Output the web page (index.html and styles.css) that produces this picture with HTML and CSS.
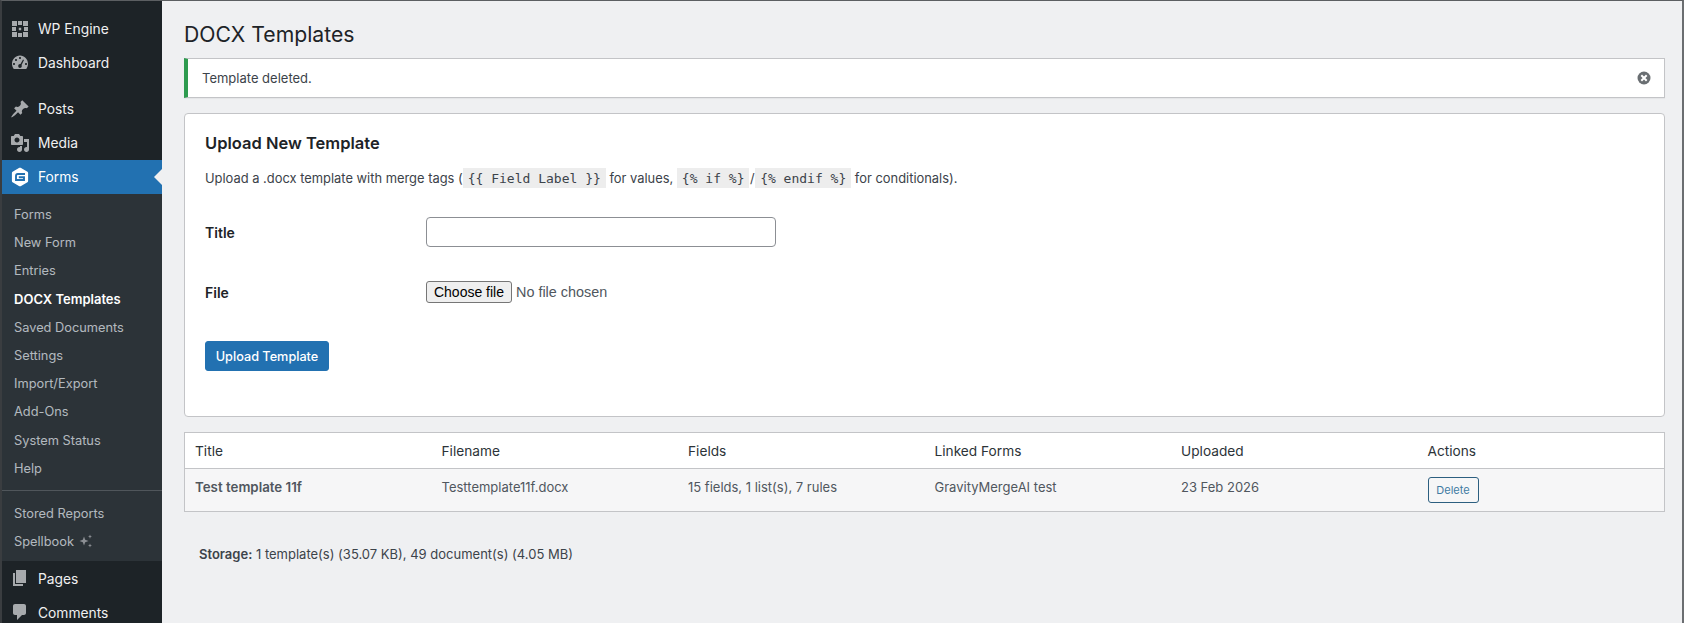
FILE: index.html
```html
<!DOCTYPE html>
<html lang="en">
<head>
<meta charset="utf-8">
<title>DOCX Templates</title>
<link rel="stylesheet" href="styles.css">
</head>
<body>
<div class="app">
  <nav class="sidebar">
    <ul class="menu menu-first">
      <li class="item"><svg class="icon" viewBox="0 0 20 20"><path fill="#a7aaad" d="M2 2h5v5H2zM8 2h4v4H8zM13 2h5v5h-5zM2 8h4v4H2zM14 8h4v4h-4zM2 13h5v5H2zM8 14h4v4H8zM13 13h5v5h-5zM8.800 8.800h2.400v2.400H8.800z"/></svg><span>WP Engine</span></li>
      <li class="item"><svg class="icon" viewBox="0 0 20 20"><path fill="#a7aaad" fill-rule="evenodd" d="M3.760 16h12.480c1.100-1.430 1.760-3.210 1.760-5.140 0-4.620-3.570-8.360-8-8.360s-8 3.740-8 8.360c0 1.930.66 3.710 1.760 5.140zM10 4c.55 0 1 .45 1 1s-.45 1-1 1-1-.45-1-1 .45-1 1-1zM6 6c.55 0 1 .45 1 1s-.45 1-1 1-1-.45-1-1 .45-1 1-1zm8.010 1l-2.440 5.060c.14.28.23.6.23.94 0 1.100-.81 2-1.800 2s-1.800-.9-1.800-2 .81-2 1.800-2c.18 0 .35.03.51.08L13 6.600zM4 10c.55 0 1 .45 1 1s-.45 1-1 1-1-.45-1-1 .45-1 1-1zm12 0c.55 0 1 .45 1 1s-.45 1-1 1-1-.45-1-1 .45-1 1-1z"/></svg><span>Dashboard</span></li>
    </ul>
    <ul class="menu menu-second">
      <li class="item"><svg class="icon" viewBox="0 0 20 20"><path fill="#a7aaad" d="M10.440 3.020l1.820-1.820 6.360 6.350-1.830 1.820c-1.050-.68-2.480-.57-3.410.36l-.75.75c-.92.93-1.040 2.350-.35 3.400l-1.830 1.820-2.410-2.410-2.800 2.790c-.42.42-3.380 2.710-3.800 2.290s1.860-3.390 2.280-3.810l2.790-2.790L4.100 9.360l1.830-1.820c1.050.69 2.480.57 3.400-.36l.75-.75c.93-.92 1.050-2.350.36-3.410z"/></svg><span>Posts</span></li>
      <li class="item"><svg class="icon" viewBox="0 0 20 20"><path fill="#a7aaad" fill-rule="evenodd" d="M13 11V4c0-.55-.45-1-1-1h-1.670L9 1H5L3.670 3H2c-.55 0-1 .45-1 1v7c0 .55.45 1 1 1h10c.55 0 1-.45 1-1zM7 4.500c1.380 0 2.500 1.120 2.500 2.500S8.380 9.500 7 9.500 4.500 8.380 4.500 7 5.620 4.500 7 4.500zM14 6h5v10.500c0 1.380-1.120 2.500-2.500 2.500S14 17.880 14 16.500s1.120-2.500 2.500-2.500c.17 0 .34.02.5.05V9h-3V6zm-4 8.050V13h2v3.500c0 1.380-1.120 2.500-2.500 2.500S7 17.880 7 16.500 8.120 14 9.500 14c.17 0 .34.02.5.05z"/></svg><span>Media</span></li>
      <li class="item item-active"><svg class="icon" viewBox="0 0 20 20"><path fill="#fff" d="M10 2l6.800 3.900v8.200L10 18l-6.800-3.900V5.900z" stroke="#fff" stroke-width="2.600" stroke-linejoin="round"/><path fill="none" stroke="#2271b1" stroke-width="1.900" d="M15 7H7.800C6.600 7 6 7.800 6 9v4h8v-2.700H8.800"/></svg><span>Forms</span><i class="caret"></i></li>
    </ul>
    <ul class="submenu">
      <li>Forms</li>
      <li>New Form</li>
      <li>Entries</li>
      <li class="current">DOCX Templates</li>
      <li>Saved Documents</li>
      <li>Settings</li>
      <li>Import/Export</li>
      <li>Add-Ons</li>
      <li>System Status</li>
      <li>Help</li>
      <li class="divider"></li>
      <li>Stored Reports</li>
      <li>Spellbook <svg class="sparkle" viewBox="0 0 14 14"><path fill="#8c8f94" d="M5 2.500l1.200 3.300L9.500 7 6.200 8.200 5 11.500 3.800 8.200.5 7l3.300-1.200zM11 .5l.6 1.600 1.400.5-1.400.5-.6 1.600-.6-1.600-1.400-.5 1.400-.5zM11 9.500l.6 1.400 1.400.6-1.400.6-.6 1.400-.6-1.400-1.400-.6 1.400-.6z"/></svg></li>
    </ul>
    <ul class="menu">
      <li class="item"><svg class="icon" viewBox="0 0 20 20"><path fill="#a7aaad" d="M6 15V2h10v13H6zm-1 1h8v2H3V5h2v11z"/></svg><span>Pages</span></li>
      <li class="item"><svg class="icon" viewBox="0 0 20 20"><path fill="#a7aaad" d="M5 2h9c1.100 0 2 .9 2 2v7c0 1.100-.9 2-2 2h-2l-5 5v-5H5c-1.100 0-2-.9-2-2V4c0-1.100.9-2 2-2z"/></svg><span>Comments</span></li>
    </ul>
  </nav>
  <main class="content">
    <h1 class="page-title">DOCX Templates</h1>
    <div class="notice">
      <p>Template deleted.</p>
      <svg class="dismiss" viewBox="0 0 14 14"><circle cx="7" cy="7" r="6.500" fill="#696e72"/><path stroke="#fff" stroke-width="2" d="M4.300 4.300l5.400 5.400M9.700 4.300l-5.400 5.400"/></svg>
    </div>
    <section class="card">
      <h2 class="card-title">Upload New Template</h2>
      <p class="intro">Upload a .docx template with merge tags (<code>{{ Field Label }}</code> for values, <code>{% if %}</code><span class="slash">/</span><code>{% endif %}</code> for conditionals).</p>
      <div class="form-row row-title">
        <label class="form-label" for="tpl-title">Title</label>
        <input class="text-input" id="tpl-title" type="text">
      </div>
      <div class="form-row row-file">
        <span class="form-label">File</span>
        <button class="file-btn" type="button">Choose file</button>
        <span class="file-status">No file chosen</span>
      </div>
      <button class="primary-btn" type="button">Upload Template</button>
    </section>
    <table class="templates">
      <thead>
        <tr><th>Title</th><th>Filename</th><th>Fields</th><th>Linked Forms</th><th>Uploaded</th><th>Actions</th></tr>
      </thead>
      <tbody>
        <tr>
          <td><strong>Test template 11f</strong></td>
          <td>Testtemplate11f.docx</td>
          <td>15 fields, 1 list(s), 7 rules</td>
          <td>GravityMergeAI test</td>
          <td>23 Feb 2026</td>
          <td><button class="small-btn" type="button">Delete</button></td>
        </tr>
      </tbody>
    </table>
    <p class="storage"><strong>Storage:</strong> 1 template(s) (35.07 KB), 49 document(s) (4.05 MB)</p>
  </main>
</div>
</body>
</html>
```

FILE: styles.css
```css
* { box-sizing: border-box; }
html, body { margin: 0; padding: 0; height: 100%; overflow: hidden; }
body {
  background: #eff0f2;
  color: #3c434a;
  font-family: Inter, "Liberation Sans", sans-serif;
  font-size: 13px;
  line-height: 1.4;
}
ul { list-style: none; margin: 0; padding: 0; }
.app {
  display: flex;
  height: 623px;
  overflow: hidden;
  border-top: 1px solid #5c5f62;
  border-left: 2px solid #3a3d40;
  border-right: 2px solid #6b6e71;
}
.sidebar {
  flex: 0 0 160px;
  background: #1d2327;
  color: #f0f0f1;
}
.menu-first { padding-top: 11px; }
.menu-second { padding-top: 12px; }
.item {
  position: relative;
  display: flex;
  align-items: center;
  height: 34px;
  padding-left: 8px;
  font-size: 13.800px;
  font-weight: 400;
  color: #f0f0f1;
}
.item span { margin-left: 8px; padding-top: 2px; }
.icon { width: 20px; height: 20px; flex: none; }
.item-active { background: #2271b1; color: #fff; }
.caret {
  position: absolute;
  right: 0;
  top: 50%;
  margin-top: -8px;
  border: 8px solid transparent;
  border-right-color: #f0f0f1;
  border-left-width: 0;
}
.submenu {
  background: #2c3338;
  padding: 6px 0;
  color: rgba(240, 246, 252, 0.7);
}
.submenu li {
  height: 28.200px;
  line-height: 28.200px;
  padding-top: 1px;
  padding-left: 12px;
  font-size: 12.800px;
  white-space: nowrap;
}
.submenu .current { color: #fff; padding-top: 0; font-size: 13px; font-weight: 600; }
.submenu .divider {
  height: 1px;
  background: #50565b;
  margin: 8px 0;
  padding: 0;
}
.sparkle { width: 14px; height: 14px; margin-left: 1px; vertical-align: -2px; }
.content {
  flex: 1;
  padding: 0 17px 0 22px;
  min-width: 0;
}
.page-title {
  margin: 0;
  padding-top: 20px;
  height: 57px;
  font-size: 21.200px;
  font-weight: 400;
  line-height: 1.3;
  color: #1d2327;
}
.notice {
  display: flex;
  align-items: center;
  justify-content: space-between;
  height: 40px;
  background: #fff;
  border: 1px solid #c3c4c7;
  border-left: 4px solid #2e9b4f;
  padding: 0 13px 0 14px;
  box-shadow: 0 1px 1px rgba(0, 0, 0, 0.04);
}
.notice p { margin: 0; }
.dismiss { width: 14px; height: 14px; }
.card {
  margin-top: 15px;
  height: 304px;
  background: #fff;
  border: 1px solid #c3c4c7;
  border-radius: 4px;
  padding: 18px 20px 20px;
}
.card-title {
  margin: 0;
  font-size: 16.500px;
  font-weight: 600;
  line-height: 22px;
  color: #1d2327;
}
.intro { margin: 13px 0 0; font-size: 12.900px; line-height: 24px; white-space: nowrap; }
code {
  font-family: "DejaVu Sans Mono", monospace;
  font-size: 13px;
  background: rgba(0, 0, 0, 0.07);
  padding: 3px 5px 2px;
  color: #3c434a;
}
.slash { margin: 0 0.500px; }
.form-row { display: flex; align-items: center; }
.row-title { margin-top: 26px; height: 30px; }
.row-file { margin-top: 34px; height: 22px; }
.form-label {
  flex: 0 0 221px;
  padding-top: 2px;
  font-size: 14px;
  font-weight: 600;
  color: #1d2327;
}
.text-input {
  width: 350px;
  height: 30px;
  border: 1px solid #8c8f94;
  border-radius: 4px;
  background: #fff;
  padding: 0 8px;
}
.file-btn {
  width: 86px;
  height: 22px;
  padding: 0;
  font-family: "Liberation Sans", Arial, sans-serif;
  font-size: 14px;
  color: #000;
  background: #efefef;
  border: 1px solid #767676;
  border-radius: 3px;
}
.file-status {
  margin-left: 4px;
  font-family: "Liberation Sans", Arial, sans-serif;
  font-size: 14.400px;
  color: #50575e;
}
.primary-btn {
  display: block;
  margin-top: 38px;
  width: 124px;
  height: 30px;
  background: #2271b1;
  border: 1px solid #2271b1;
  border-radius: 3px;
  color: #fff;
  font-family: inherit;
  font-size: 12.700px;
  font-weight: 500;
  padding: 0;
}
.templates {
  width: 100%;
  margin-top: 15px;
  table-layout: fixed;
  border-collapse: separate;
  border-spacing: 0;
  background: #fff;
  border: 1px solid #c3c4c7;
}
.templates th {
  height: 36px;
  padding: 2px 10px 0;
  text-align: left;
  font-size: 13.700px;
  font-weight: 400;
  color: #2c3338;
  border-bottom: 1px solid #c3c4c7;
}
.templates td {
  height: 42px;
  padding: 0 10px 5px;
  background: #f6f6f7;
  color: #50575e;
  font-size: 13px;
  vertical-align: middle;
}
.templates strong { font-size: 13.300px; font-weight: 600; }
.small-btn {
  display: block;
  margin-top: 5px;
  height: 26px;
  width: 51px;
  padding: 0;
  font-family: inherit;
  font-size: 11px;
  color: #3f7ba3;
  background: #f6f6f7;
  border: 1px solid #2c5f80;
  border-radius: 3px;
}
.storage { margin: 33px 0 0 15px; color: #3c434a; }
.storage strong { font-weight: 600; }
```
